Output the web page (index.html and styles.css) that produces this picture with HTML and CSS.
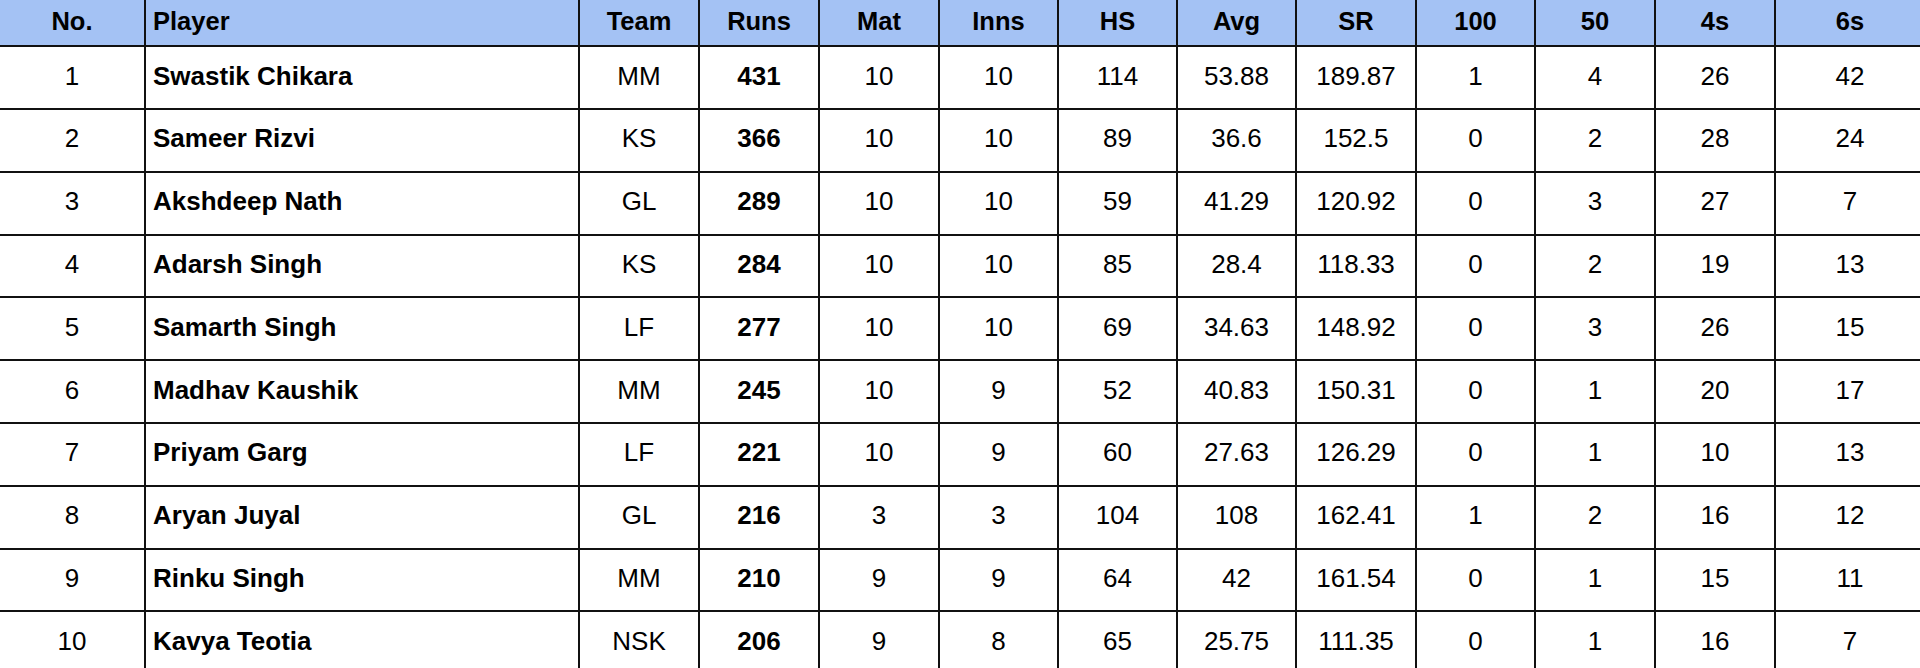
FILE: index.html
```html
<!DOCTYPE html>
<html lang="en">
<head>
<meta charset="utf-8">
<title>Most runs</title>
<link rel="stylesheet" href="styles.css">
</head>
<body>
<table class="stats">
  <colgroup>
    <col class="c-no"><col class="c-player"><col class="c-w120"><col class="c-w120"><col class="c-w120"><col class="c-w119"><col class="c-w119"><col class="c-w119"><col class="c-w120"><col class="c-w119"><col class="c-w120"><col class="c-w120"><col class="c-last">
  </colgroup>
  <thead>
    <tr class="head">
      <th>No.</th><th class="name">Player</th><th>Team</th><th>Runs</th><th>Mat</th><th>Inns</th><th>HS</th><th>Avg</th><th>SR</th><th>100</th><th>50</th><th>4s</th><th>6s</th>
    </tr>
  </thead>
  <tbody>
    <tr class="first"><td>1</td><td class="name">Swastik Chikara</td><td>MM</td><td class="runs">431</td><td>10</td><td>10</td><td>114</td><td>53.88</td><td>189.87</td><td>1</td><td>4</td><td>26</td><td>42</td></tr>
    <tr><td>2</td><td class="name">Sameer Rizvi</td><td>KS</td><td class="runs">366</td><td>10</td><td>10</td><td>89</td><td>36.6</td><td>152.5</td><td>0</td><td>2</td><td>28</td><td>24</td></tr>
    <tr><td>3</td><td class="name">Akshdeep Nath</td><td>GL</td><td class="runs">289</td><td>10</td><td>10</td><td>59</td><td>41.29</td><td>120.92</td><td>0</td><td>3</td><td>27</td><td>7</td></tr>
    <tr><td>4</td><td class="name">Adarsh Singh</td><td>KS</td><td class="runs">284</td><td>10</td><td>10</td><td>85</td><td>28.4</td><td>118.33</td><td>0</td><td>2</td><td>19</td><td>13</td></tr>
    <tr><td>5</td><td class="name">Samarth Singh</td><td>LF</td><td class="runs">277</td><td>10</td><td>10</td><td>69</td><td>34.63</td><td>148.92</td><td>0</td><td>3</td><td>26</td><td>15</td></tr>
    <tr><td>6</td><td class="name">Madhav Kaushik</td><td>MM</td><td class="runs">245</td><td>10</td><td>9</td><td>52</td><td>40.83</td><td>150.31</td><td>0</td><td>1</td><td>20</td><td>17</td></tr>
    <tr><td>7</td><td class="name">Priyam Garg</td><td>LF</td><td class="runs">221</td><td>10</td><td>9</td><td>60</td><td>27.63</td><td>126.29</td><td>0</td><td>1</td><td>10</td><td>13</td></tr>
    <tr><td>8</td><td class="name">Aryan Juyal</td><td>GL</td><td class="runs">216</td><td>3</td><td>3</td><td>104</td><td>108</td><td>162.41</td><td>1</td><td>2</td><td>16</td><td>12</td></tr>
    <tr><td>9</td><td class="name">Rinku Singh</td><td>MM</td><td class="runs">210</td><td>9</td><td>9</td><td>64</td><td>42</td><td>161.54</td><td>0</td><td>1</td><td>15</td><td>11</td></tr>
    <tr><td>10</td><td class="name">Kavya Teotia</td><td>NSK</td><td class="runs">206</td><td>9</td><td>8</td><td>65</td><td>25.75</td><td>111.35</td><td>0</td><td>1</td><td>16</td><td>7</td></tr>
  </tbody>
</table>
</body>
</html>
```
FILE: styles.css
```css
html, body {
  margin: 0;
  padding: 0;
  overflow: hidden;
  background: #ffffff;
}

body {
  font-family: "Liberation Sans", Arial, sans-serif;
  font-size: 26px;
  color: #000000;
}

.stats {
  table-layout: fixed;
  width: 1926px;
  border-collapse: separate;
  border-spacing: 0;
}

.c-no { width: 146px; }
.c-player { width: 434px; }
.c-w120 { width: 120px; }
.c-w119 { width: 119px; }
.c-last { width: 150px; }

.stats th,
.stats td {
  box-sizing: border-box;
  border-right: 2px solid #111111;
  border-bottom: 2px solid #111111;
  padding: 0 0 3px 0;
  text-align: center;
  vertical-align: middle;
  white-space: nowrap;
  overflow: hidden;
}

.stats th {
  background: #a4c2f4;
  font-weight: bold;
  font-size: 25.5px;
}

.stats .name {
  text-align: left;
  padding-left: 7px;
  font-weight: bold;
}

.stats .runs {
  font-weight: bold;
}

.head { height: 47px; }
.stats tbody tr { height: 62.8px; }
.stats tbody tr.first { height: 63px; }
```
